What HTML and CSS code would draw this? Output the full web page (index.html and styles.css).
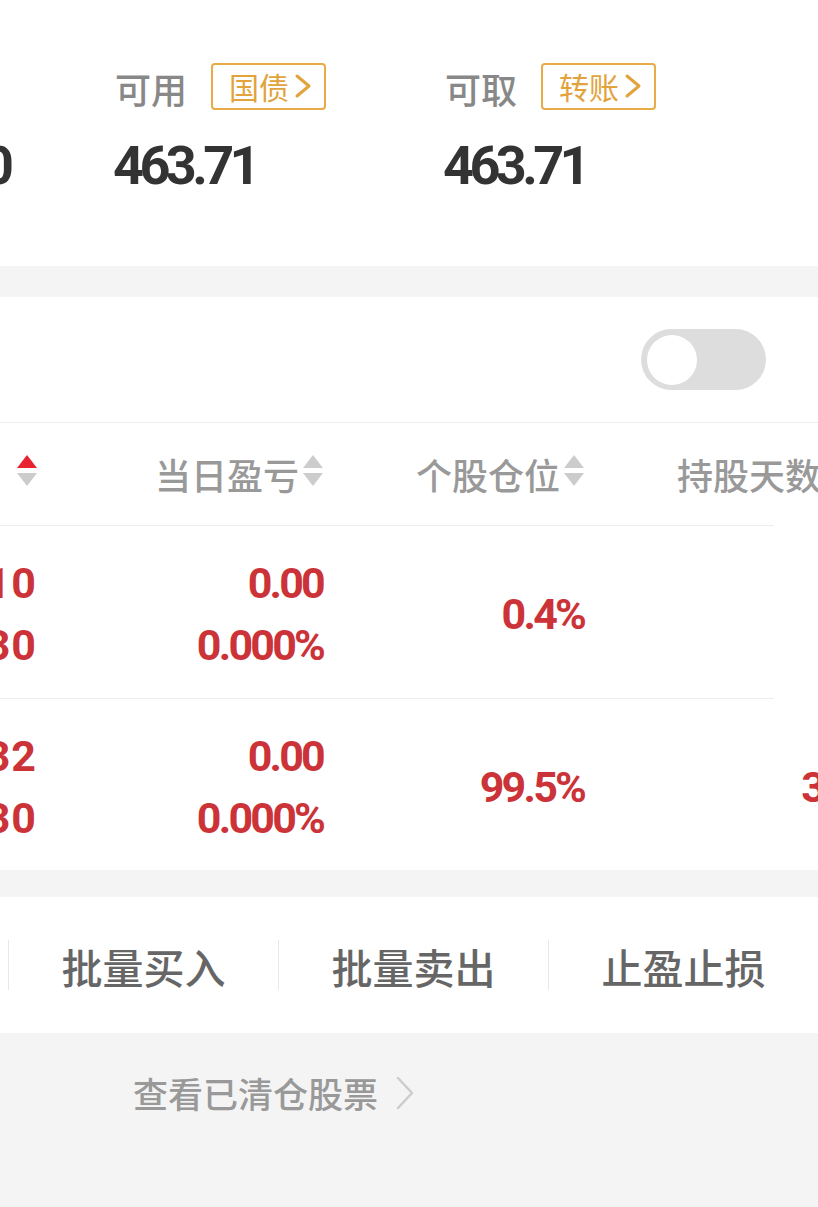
FILE: index.html
```html
<!DOCTYPE html>
<html lang="zh-CN">
<head>
<meta charset="utf-8">
<title>持仓</title>
<link rel="stylesheet" href="styles.css">
</head>
<body>
<div class="page">
  <section class="summary">
    <div class="acct acct-cut">
      <div class="acct-head"></div>
      <div class="acct-num">1,000.00</div>
    </div>
    <div class="acct acct-wide">
      <div class="acct-head">
        <span class="acct-label">可用</span>
        <span class="tag">国债<svg class="tag-chev" viewBox="0 0 18 26" width="18" height="26"><path d="M3 3 L15 13 L3 23" fill="none" stroke="currentColor" stroke-width="3" stroke-linecap="round" stroke-linejoin="round"/></svg></span>
      </div>
      <div class="acct-num">463.71</div>
    </div>
    <div class="acct">
      <div class="acct-head">
        <span class="acct-label">可取</span>
        <span class="tag">转账<svg class="tag-chev" viewBox="0 0 18 26" width="18" height="26"><path d="M3 3 L15 13 L3 23" fill="none" stroke="currentColor" stroke-width="3" stroke-linecap="round" stroke-linejoin="round"/></svg></span>
      </div>
      <div class="acct-num">463.71</div>
    </div>
  </section>

  <div class="band"></div>

  <section class="holdings">
    <div class="toolbar">
      <span class="switch"><span class="knob"></span></span>
    </div>
    <div class="table">
      <div class="trow thead">
        <div class="cell c0">
          <svg class="sort" viewBox="0 0 20 32" width="20" height="32"><path d="M10 0 L20 13 L0 13 Z" fill="#e8232f"/><path d="M0 18 L20 18 L10 31 Z" fill="#cccccc"/></svg>
        </div>
        <div class="cell c1"><span class="th">当日盈亏</span><svg class="sort" viewBox="0 0 20 32" width="20" height="32"><path d="M10 0 L20 13 L0 13 Z" fill="#cccccc"/><path d="M0 18 L20 18 L10 31 Z" fill="#cccccc"/></svg></div>
        <div class="cell c2"><span class="th">个股仓位</span><svg class="sort" viewBox="0 0 20 32" width="20" height="32"><path d="M10 0 L20 13 L0 13 Z" fill="#cccccc"/><path d="M0 18 L20 18 L10 31 Z" fill="#cccccc"/></svg></div>
        <div class="cell c3"><span class="th">持股天数</span><svg class="sort" viewBox="0 0 20 32" width="20" height="32"><path d="M10 0 L20 13 L0 13 Z" fill="#cccccc"/><path d="M0 18 L20 18 L10 31 Z" fill="#cccccc"/></svg></div>
      </div>
      <div class="trow tbody first">
        <div class="cell c0 val"><span>2.910</span><span>2.830</span></div>
        <div class="cell c1 val"><span>0.00</span><span>0.000%</span></div>
        <div class="cell c2 val"><span class="big">0.4%</span></div>
        <div class="cell c3 val"><span class="big">1</span></div>
      </div>
      <div class="trow tbody last">
        <div class="cell c0 val"><span>3.332</span><span>2.830</span></div>
        <div class="cell c1 val"><span>0.00</span><span>0.000%</span></div>
        <div class="cell c2 val"><span class="big">99.5%</span></div>
        <div class="cell c3 val"><span class="big">32</span></div>
      </div>
    </div>
  </section>

  <div class="band band-sm"></div>

  <nav class="actions">
    <div class="action">批量买入</div>
    <div class="action">批量卖出</div>
    <div class="action">止盈止损</div>
  </nav>

  <div class="cleared">
    <span class="cleared-text">查看已清仓股票</span>
    <svg class="cleared-chev" viewBox="0 0 20 34" width="20" height="34"><path d="M3 2 L17 17 L3 32" fill="none" stroke="#cccccc" stroke-width="2.5" stroke-linecap="round" stroke-linejoin="round"/></svg>
  </div>
</div>
</body>
</html>
```

FILE: styles.css
```css
* { box-sizing: border-box; }

html, body {
  margin: 0;
  padding: 0;
  background: #f4f4f4;
}

body {
  width: 818px;
  height: 1207px;
  overflow: hidden;
  font-family: "Noto Sans CJK SC", "Noto Sans", sans-serif;
}

.page {
  width: 818px;
  overflow: hidden;
}

/* ---------- summary ---------- */
.summary {
  height: 266px;
  background: #ffffff;
  display: flex;
  padding-top: 63px;
}

.acct {
  display: flex;
  flex-direction: column;
}

.acct-cut {
  width: 10px;
  flex: 0 0 10px;
  align-items: flex-end;
}

.acct-wide {
  margin-left: 103px;
  width: 330px;
  flex: 0 0 330px;
}

.acct-head {
  height: 50px;
  display: flex;
  align-items: center;
}

.acct-label {
  font-size: 36px;
  line-height: 50px;
  color: #888888;
  font-weight: 500;
  margin-left: 2px;
}

.tag {
  margin-left: 24px;
  height: 47px;
  margin-top: -4px;
  border: 2px solid #e9ab46;
  border-radius: 4px;
  padding: 0 12px 0 16px;
  display: inline-flex;
  align-items: center;
  gap: 5px;
  font-size: 30px;
  line-height: 40px;
  color: #e2a23c;
}

.tag-chev {
  display: block;
  color: #e2a23c;
}

.acct-num {
  margin-top: 26px;
  font-family: Roboto, "Liberation Sans", sans-serif;
  font-weight: 700;
  font-size: 54px;
  line-height: 54px;
  letter-spacing: -4.6px;
  color: #333333;
  white-space: nowrap;
}

.acct-cut .acct-num {
  letter-spacing: -4px;
}

/* ---------- bands ---------- */
.band {
  height: 31px;
}

.band-sm {
  height: 27px;
}

/* ---------- holdings ---------- */
.holdings {
  background: #ffffff;
}

.toolbar {
  height: 126px;
  border-bottom: 1px solid #eeeeee;
  display: flex;
  align-items: center;
  justify-content: flex-end;
  padding-right: 52px;
}

.switch {
  width: 125px;
  height: 61px;
  border-radius: 31px;
  background: #dddddd;
  display: flex;
  align-items: center;
  padding-left: 6px;
}

.knob {
  width: 50px;
  height: 50px;
  border-radius: 50%;
  background: #ffffff;
}

.table {
  width: 774px;
}

.trow {
  display: flex;
}

.thead {
  height: 103px;
  border-bottom: 1px solid #eeeeee;
}

.tbody.first {
  height: 173px;
  border-bottom: 1px solid #eeeeee;
}

.tbody.last {
  height: 171px;
}

.cell {
  display: flex;
  justify-content: flex-end;
  align-items: center;
  flex: 0 0 auto;
  white-space: nowrap;
}

.c0 { width: 37px; }
.c1 { width: 286px; }
.c2 { width: 261px; }
.c3 { width: 261px; }

.th {
  font-size: 36px;
  line-height: 50px;
  color: #999999;
  font-weight: 500;
}

.sort {
  display: block;
  margin-left: 4px;
  margin-bottom: 6px;
}

.val {
  flex-direction: column;
  align-items: flex-end;
  justify-content: center;
  font-family: Roboto, "Liberation Sans", sans-serif;
  font-weight: 700;
  color: #cc3338;
  font-size: 43px;
  line-height: 62px;
  letter-spacing: -2.8px;
  padding-top: 4px;
}

.c0.val {
  letter-spacing: 1px;
}

.val span {
  display: block;
}

/* ---------- actions ---------- */
.actions {
  height: 136px;
  background: #ffffff;
  display: flex;
  align-items: center;
  padding-left: 8px;
}

.action {
  flex: 0 0 270px;
  height: 50px;
  border-left: 1px solid #e8e8e8;
  display: flex;
  align-items: center;
  justify-content: center;
  font-size: 41px;
  line-height: 50px;
  font-weight: 500;
  color: #666666;
  padding-top: 2px;
}

/* ---------- cleared ---------- */
.cleared {
  height: 174px;
  display: flex;
  align-items: center;
  padding-left: 133px;
  padding-bottom: 54px;
}

.cleared-text {
  font-size: 35px;
  line-height: 50px;
  color: #999999;
  font-weight: 500;
}

.cleared-chev {
  display: block;
  margin-left: 17px;
}
```
